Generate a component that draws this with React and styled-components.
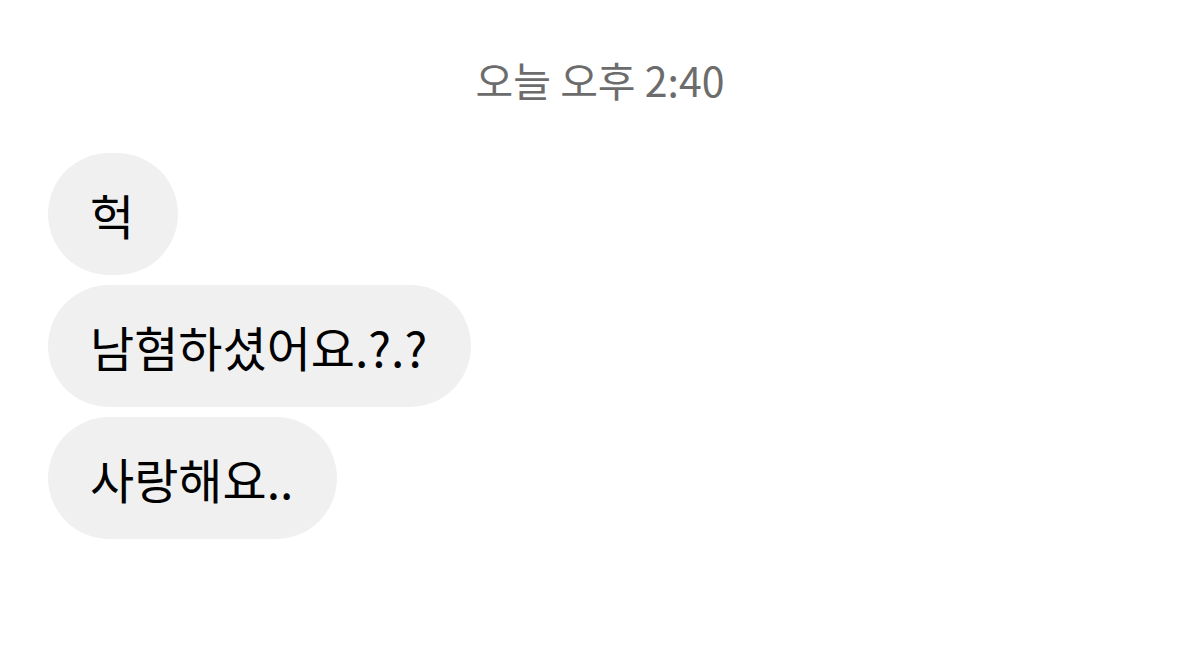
import React from 'react'
import styled, { createGlobalStyle } from 'styled-components'

const GlobalStyle = createGlobalStyle`
  html, body {
    margin: 0;
    padding: 0;
    background: #fff;
  }
  body {
    font-family: "Noto Sans CJK KR", "Noto Sans", sans-serif;
  }
`

const Chat = styled.div`
  width: 1200px;
  height: 669px;
  box-sizing: border-box;
  padding: 53px 48px 0;
  display: flex;
  flex-direction: column;
  align-items: flex-start;
`

const Stamp = styled.div`
  align-self: stretch;
  text-align: center;
  color: #6c6c6c;
  font-size: 41px;
  line-height: 52px;
  margin-bottom: 48px;
`

const Bubble = styled.div`
  height: 122px;
  box-sizing: border-box;
  padding: 0 44px 0 42px;
  border-radius: 61px;
  background: #f0f0f0;
  color: #000;
  font-size: 48px;
  display: flex;
  align-items: center;
  margin-bottom: ${props => props.gap || 10}px;
`

const messages = ['헉', '남혐하셨어요.?.?', '사랑해요..']

export default function App() {
  return (
    <>
      <GlobalStyle />
      <Chat>
        <Stamp>오늘 오후 2:40</Stamp>
        {messages.map(text => (
          <Bubble key={text}>{text}</Bubble>
        ))}
      </Chat>
    </>
  )
}
